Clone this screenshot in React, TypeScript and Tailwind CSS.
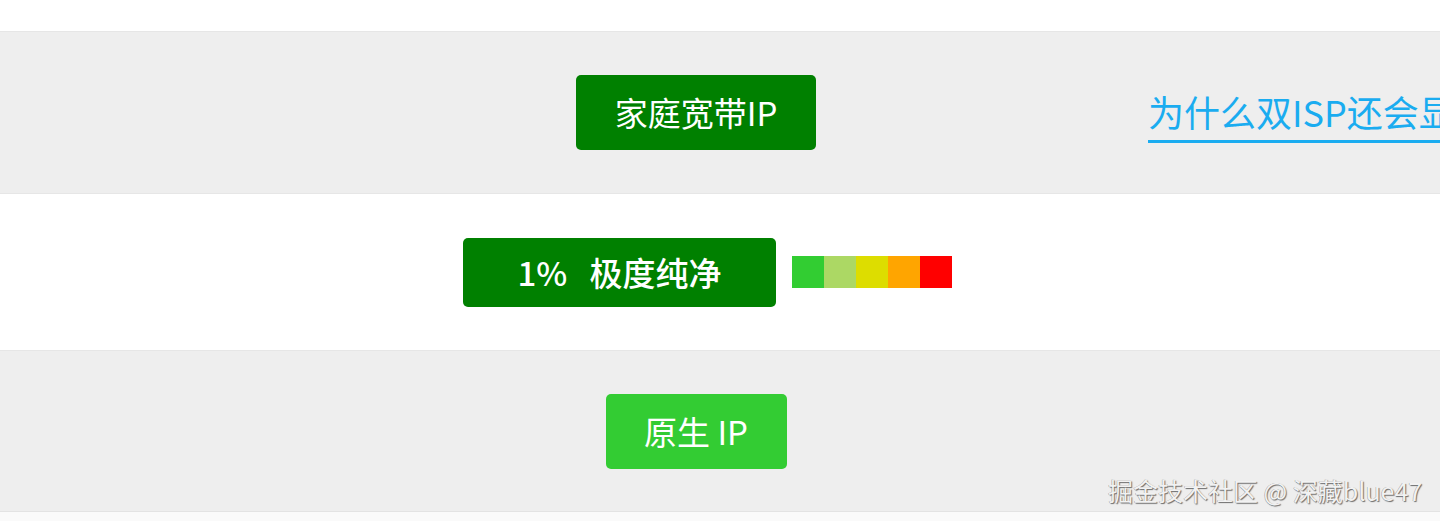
import React from "react";

const cjk = { fontFamily: '"Noto Sans CJK SC", "Noto Sans", sans-serif' };

export default function App() {
  return (
    <div className="w-[1440px] h-[521px] overflow-hidden bg-white relative" style={cjk}>
      <div className="h-[32px] bg-white border-b border-[#e6e6e6]" />
      {/* row 1 */}
      <div className="h-[161px] bg-[#eeeeee] grid grid-cols-[296px_800px_1fr] items-center">
        <div />
        <div className="flex justify-center">
          <div className="w-[240px] h-[75px] rounded-[5px] bg-[#008000] text-white text-[33px] flex items-center justify-center leading-none">
            家庭宽带IP
          </div>
        </div>
        <div className="pl-[52px] overflow-hidden whitespace-nowrap">
          <span className="inline-block mt-[8px] text-[#1aacf0] text-[36px] leading-[40px] border-b-[3px] border-[#1aacf0] pb-[9px] pr-[40px]">
            为什么双ISP还会显示住宅IP
          </span>
        </div>
      </div>
      {/* row 2 */}
      <div className="h-[157px] bg-white border-t border-[#e6e6e6] flex items-center justify-center">
        <div className="w-[800px] ml-[296px] mr-auto flex justify-center">
          <div className="flex items-center ml-[23px]">
            <div className="w-[313px] h-[69px] rounded-[5px] bg-[#008000] text-white text-[33px] font-medium flex items-center justify-center leading-none whitespace-pre">
              1%   极度纯净
            </div>
            <div className="ml-[16px] flex h-[32px]">
              <div className="w-[32px] bg-[#32cd32]" />
              <div className="w-[32px] bg-[#acd864]" />
              <div className="w-[32px] bg-[#dddd00]" />
              <div className="w-[32px] bg-[#ffa500]" />
              <div className="w-[32px] bg-[#ff0000]" />
            </div>
          </div>
        </div>
      </div>
      {/* row 3 */}
      <div className="h-[161px] bg-[#eeeeee] border-t border-[#e6e6e6] grid grid-cols-[296px_800px_1fr] items-center">
        <div />
        <div className="flex justify-center">
          <div className="w-[181px] h-[75px] rounded-[5px] bg-[#33cc33] text-white text-[33px] flex items-center justify-center leading-none whitespace-pre">
            原生 IP
          </div>
        </div>
        <div />
      </div>
      <div className="h-[10px] bg-[#fafafa] border-t border-[#e3e3e3]" />
      <div
        className="absolute left-[1108px] top-[474px] text-[25px] leading-[32px] text-[#f2f2f2] whitespace-nowrap"
        style={{ textShadow: "1px 1px 1px rgba(0,0,0,0.55), -0.5px -0.5px 0.5px rgba(0,0,0,0.35)" }}
      >
        掘金技术社区 @ 深藏blue47
      </div>
    </div>
  );
}
